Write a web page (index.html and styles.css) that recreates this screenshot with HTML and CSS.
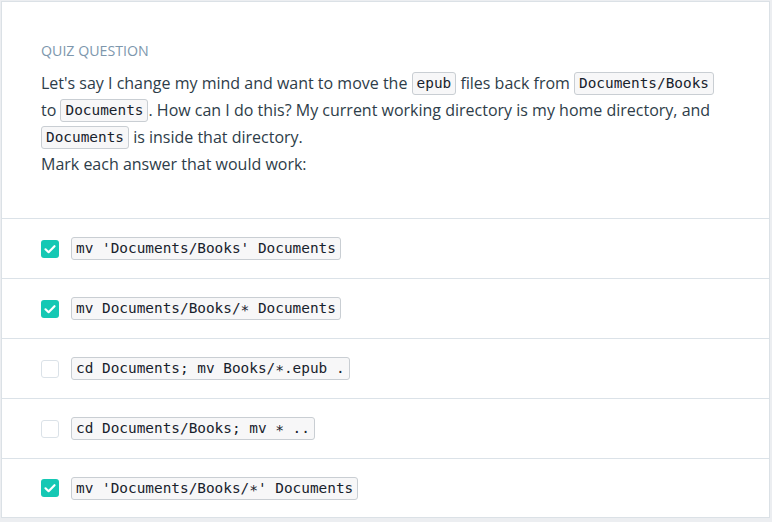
FILE: index.html
```html
<!DOCTYPE html>
<html>
<head>
<meta charset="utf-8">
<link rel="stylesheet" href="styles.css">
</head>
<body>
<div class="card">
  <div class="question">
    <div class="label">Quiz Question</div>
    <div class="text">Let's say I change my mind and want to move the <code class="chip">epub</code> files back from <code class="chip">Documents/Books</code> to <code class="chip">Documents</code>. How can I do this? My current working directory is my home directory, and <code class="chip">Documents</code> is inside that directory.<br>Mark each answer that would work:</div>
  </div>
  <ul class="answers">
    <li class="answer"><span class="box checked"><svg viewBox="0 0 18 18" width="18" height="18"><path d="M4.5 9.3 L7.6 12.2 L13.5 6.2" fill="none" stroke="#fff" stroke-width="2.2" stroke-linecap="round" stroke-linejoin="round"/></svg></span><code class="chip">mv 'Documents/Books' Documents</code></li>
    <li class="answer"><span class="box checked"><svg viewBox="0 0 18 18" width="18" height="18"><path d="M4.5 9.3 L7.6 12.2 L13.5 6.2" fill="none" stroke="#fff" stroke-width="2.2" stroke-linecap="round" stroke-linejoin="round"/></svg></span><code class="chip">mv Documents/Books/∗ Documents</code></li>
    <li class="answer"><span class="box"></span><code class="chip">cd Documents; mv Books/∗.epub .</code></li>
    <li class="answer"><span class="box"></span><code class="chip">cd Documents/Books; mv ∗ ..</code></li>
    <li class="answer"><span class="box checked"><svg viewBox="0 0 18 18" width="18" height="18"><path d="M4.5 9.3 L7.6 12.2 L13.5 6.2" fill="none" stroke="#fff" stroke-width="2.2" stroke-linecap="round" stroke-linejoin="round"/></svg></span><code class="chip">mv 'Documents/Books/∗' Documents</code></li>
  </ul>
</div>
</body>
</html>
```

FILE: styles.css
```css
html, body {
  margin: 0;
  padding: 0;
  background: #eceef1;
}
body {
  font-family: "Open Sans", "Liberation Sans", sans-serif;
  color: #2e3d49;
}
.card {
  box-sizing: border-box;
  margin: 1px 0 0 1px;
  width: 769px;
  height: 517px;
  background: #fff;
  border: 1px solid #dbe1e6;
}
.question {
  padding: 39px 39px 40px 39px;
  border-bottom: 1px solid #dbe2e8;
}
.label {
  font-size: 14.2px;
  line-height: 20px;
  text-transform: uppercase;
  color: #7d97ad;
  margin-bottom: 9px;
}
.text {
  font-size: 16px;
  line-height: 27px;
}
.chip {
  display: inline-block;
  box-sizing: border-box;
  height: 23px;
  padding: 0 4px;
  line-height: 21px;
  font-family: "DejaVu Sans Mono", "Liberation Mono", monospace;
  font-size: 14.4px;
  color: #17222c;
  background: #f7f7f8;
  border: 1px solid #c9ced3;
  border-radius: 3px;
  vertical-align: middle;
  position: relative;
  top: -1px;
}
.answers {
  list-style: none;
  margin: 0;
  padding: 0;
}
.answer {
  display: flex;
  align-items: center;
  gap: 12px;
  height: 59px;
  padding: 0 39px;
  border-bottom: 1px solid #dbe2e8;
}
.answer:last-child {
  border-bottom: none;
  height: 58px;
}
.answer .chip {
  top: 0;
}
.box {
  box-sizing: border-box;
  width: 18px;
  height: 18px;
  border-radius: 3px;
  border: 1px solid #dbe2e8;
  background: #fff;
  flex: none;
  display: flex;
}
.box.checked {
  border: none;
  background: #15c8b4;
}
```
